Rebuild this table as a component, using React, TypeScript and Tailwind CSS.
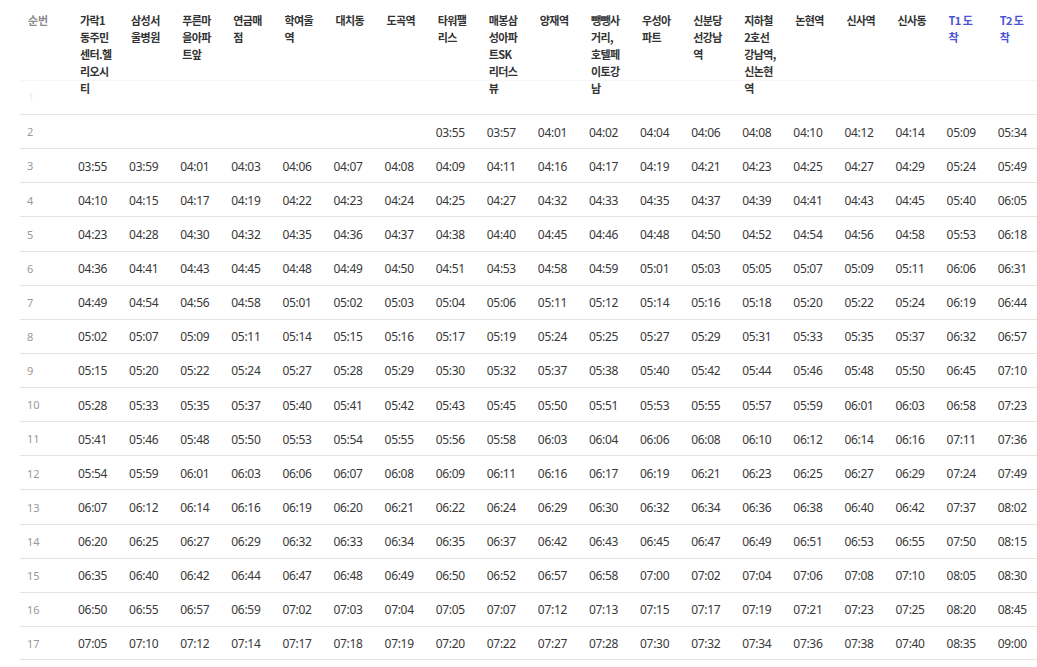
const HEADERS: { lines: string[]; blue?: boolean }[] = [
  { lines: ["가락1", "동주민", "센터.헬", "리오시", "티"] },
  { lines: ["삼성서", "울병원"] },
  { lines: ["푸른마", "을아파", "트앞"] },
  { lines: ["연금매", "점"] },
  { lines: ["학여울", "역"] },
  { lines: ["대치동"] },
  { lines: ["도곡역"] },
  { lines: ["타워팰", "리스"] },
  { lines: ["매봉삼", "성아파", "트SK", "리더스", "뷰"] },
  { lines: ["양재역"] },
  { lines: ["뺑뺑사", "거리,", "호텔페", "이토강", "남"] },
  { lines: ["우성아", "파트"] },
  { lines: ["신분당", "선강남", "역"] },
  { lines: ["지하철", "2호선", "강남역,", "신논현", "역"] },
  { lines: ["논현역"] },
  { lines: ["신사역"] },
  { lines: ["신사동"] },
  { lines: ["T1 도", "착"], blue: true },
  { lines: ["T2 도", "착"], blue: true },
];

const ROWS: string[] = [
  "- - - - - - - 03:55 03:57 04:01 04:02 04:04 04:06 04:08 04:10 04:12 04:14 05:09 05:34",
  "03:55 03:59 04:01 04:03 04:06 04:07 04:08 04:09 04:11 04:16 04:17 04:19 04:21 04:23 04:25 04:27 04:29 05:24 05:49",
  "04:10 04:15 04:17 04:19 04:22 04:23 04:24 04:25 04:27 04:32 04:33 04:35 04:37 04:39 04:41 04:43 04:45 05:40 06:05",
  "04:23 04:28 04:30 04:32 04:35 04:36 04:37 04:38 04:40 04:45 04:46 04:48 04:50 04:52 04:54 04:56 04:58 05:53 06:18",
  "04:36 04:41 04:43 04:45 04:48 04:49 04:50 04:51 04:53 04:58 04:59 05:01 05:03 05:05 05:07 05:09 05:11 06:06 06:31",
  "04:49 04:54 04:56 04:58 05:01 05:02 05:03 05:04 05:06 05:11 05:12 05:14 05:16 05:18 05:20 05:22 05:24 06:19 06:44",
  "05:02 05:07 05:09 05:11 05:14 05:15 05:16 05:17 05:19 05:24 05:25 05:27 05:29 05:31 05:33 05:35 05:37 06:32 06:57",
  "05:15 05:20 05:22 05:24 05:27 05:28 05:29 05:30 05:32 05:37 05:38 05:40 05:42 05:44 05:46 05:48 05:50 06:45 07:10",
  "05:28 05:33 05:35 05:37 05:40 05:41 05:42 05:43 05:45 05:50 05:51 05:53 05:55 05:57 05:59 06:01 06:03 06:58 07:23",
  "05:41 05:46 05:48 05:50 05:53 05:54 05:55 05:56 05:58 06:03 06:04 06:06 06:08 06:10 06:12 06:14 06:16 07:11 07:36",
  "05:54 05:59 06:01 06:03 06:06 06:07 06:08 06:09 06:11 06:16 06:17 06:19 06:21 06:23 06:25 06:27 06:29 07:24 07:49",
  "06:07 06:12 06:14 06:16 06:19 06:20 06:21 06:22 06:24 06:29 06:30 06:32 06:34 06:36 06:38 06:40 06:42 07:37 08:02",
  "06:20 06:25 06:27 06:29 06:32 06:33 06:34 06:35 06:37 06:42 06:43 06:45 06:47 06:49 06:51 06:53 06:55 07:50 08:15",
  "06:35 06:40 06:42 06:44 06:47 06:48 06:49 06:50 06:52 06:57 06:58 07:00 07:02 07:04 07:06 07:08 07:10 08:05 08:30",
  "06:50 06:55 06:57 06:59 07:02 07:03 07:04 07:05 07:07 07:12 07:13 07:15 07:17 07:19 07:21 07:23 07:25 08:20 08:45",
  "07:05 07:10 07:12 07:14 07:17 07:18 07:19 07:20 07:22 07:27 07:28 07:30 07:32 07:34 07:36 07:38 07:40 08:35 09:00",
];

const GRID = "grid grid-cols-[50px_repeat(19,51.1px)]";

export default function App() {
  return (
    <div className="h-[667px] w-full overflow-hidden bg-white font-['Noto_Sans','Noto_Sans_CJK_KR',sans-serif]">
      <div className="pl-[20px]">
        {/* header row: text spills over the faded first row */}
        <div className={`${GRID} relative z-10 h-[80px] pt-[12px]`}>
          <div className="pl-[8px] text-[11px] leading-[17px] font-semibold text-[#8a8a8a] font-['Noto_Sans_CJK_KR',sans-serif]">
            순번
          </div>
          {HEADERS.map((h, i) => (
            <div
              key={i}
              className={`pl-[10px] text-[11px] leading-[17px] font-bold tracking-[-0.6px] whitespace-nowrap font-['Noto_Sans_CJK_KR',sans-serif] ${
                h.blue ? "text-[#4b53d6]" : "text-[#333]"
              }`}
            >
              {h.lines.map((l, j) => (
                <div key={j}>{l}</div>
              ))}
            </div>
          ))}
        </div>

        <div className={`${GRID} h-[34px] items-center border-t border-[#f6f6f6]`}>
          <div className="pl-[8px] text-[11px] text-[#ececec]">1</div>
        </div>

        {ROWS.map((r, i) => (
          <div
            key={i}
            className={`${GRID} h-[34.13px] items-center border-t border-[#e4e4e4] ${
              i === ROWS.length - 1 ? "border-b" : ""
            }`}
          >
            <div className="pl-[7px] pt-[2px] text-[11px] text-[#999]">{i + 2}</div>
            {r.split(" ").map((t, j) => (
              <div key={j} className="pl-[8px] pt-[2px] text-[12px] text-[#383838] tracking-[-0.3px]">
                {t === "-" ? "" : t}
              </div>
            ))}
          </div>
        ))}
      </div>
    </div>
  );
}
